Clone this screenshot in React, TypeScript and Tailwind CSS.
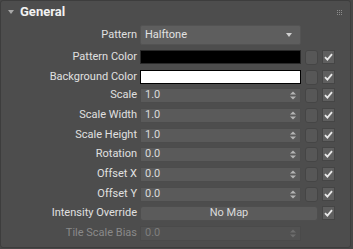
import React from 'react';

const font = { fontFamily: 'Roboto, "Liberation Sans", Arial, sans-serif' };

const Spinner = ({ dim }: { dim?: boolean }) => (
  <svg width="6" height="9" viewBox="0 0 6 9" className="shrink-0">
    <path d="M0 3.5 L3 0.5 L6 3.5 Z" fill={dim ? '#6e6e6e' : '#b4b4b4'} />
    <path d="M0 5.5 L3 8.5 L6 5.5 Z" fill={dim ? '#6e6e6e' : '#b4b4b4'} />
  </svg>
);

const MapSlot = () => (
  <div className="ml-[4px] w-[13px] h-[15px] rounded-[3px] bg-[#575757] border border-[#454545]" />
);

const Check = () => (
  <div className="ml-[4px] w-[13px] h-[14px] bg-[#5f5f5f] border border-[#454545] flex items-center justify-center">
    <svg width="9" height="8" viewBox="0 0 9 8">
      <path d="M1 4.2 L3.4 6.6 L8 1.2" stroke="#e8e8e8" strokeWidth="1.8" fill="none" />
    </svg>
  </div>
);

type RowProps = { label: string; h: string; children: React.ReactNode; dim?: boolean };

const Row = ({ label, h, children, dim }: RowProps) => (
  <div className={`flex items-start pt-[2px] ${h}`}>
    <div
      className={`w-[136px] h-[15px] flex items-center justify-end text-[11px] ${dim ? 'text-[#8a8a8a]' : 'text-[#e0e0e0]'}`}
    >
      {label}
    </div>
    <div className="ml-[3px] flex items-start">{children}</div>
  </div>
);

const NumField = ({ value, dim }: { value: string; dim?: boolean }) => (
  <div
    className={`w-[161px] h-[15px] flex items-center justify-between pl-[4px] pr-[4px] border text-[11px] ${
      dim ? 'bg-[#525252] border-[#4a4a4a] text-[#7e7e7e]' : 'bg-[#5a5a5a] border-[#4c4c4c] text-[#dadada]'
    }`}
  >
    <span>{value}</span>
    <Spinner dim={dim} />
  </div>
);

const numRows: { label: string; h: string }[] = [
  { label: 'Scale', h: 'h-[20px]' },
  { label: 'Scale Width', h: 'h-[20px]' },
  { label: 'Scale Height', h: 'h-[19px]' },
  { label: 'Rotation', h: 'h-[20px]' },
  { label: 'Offset X', h: 'h-[20px]' },
  { label: 'Offset Y', h: 'h-[19px]' },
];

export default function App() {
  return (
    <div className="w-[353px] h-[249px] bg-[#474747] overflow-hidden" style={font}>
      <div className="w-[351px] h-[248px] bg-[#4d4d4d] border border-[#3d3d3d] rounded-[3px]">
        <div className="h-[22px] flex items-center pl-[7px] pr-[8px]">
          <svg width="6" height="5" viewBox="0 0 6 5">
            <path d="M0 0 L6 0 L3 4 Z" fill="#a8a8a8" />
          </svg>
          <span className="ml-[6px] text-[13px] font-bold text-[#f2f2f2]">General</span>
          <div className="ml-auto grid grid-cols-3 gap-[1px]">
            {Array.from({ length: 9 }).map((_, i) => (
              <div key={i} className="w-[1px] h-[1px] bg-[#8c8c8c]" />
            ))}
          </div>
        </div>

        <div className="flex items-center h-[20px] mt-[2px]">
          <div className="w-[136px] text-right text-[11px] text-[#e0e0e0]">Pattern</div>
          <div className="ml-[3px] w-[161px] h-[20px] bg-[#5e5e5e] border border-[#535353] rounded-[2px] flex items-center justify-between pl-[4px] pr-[8px] text-[11px] text-[#e2e2e2]">
            <span>Halftone</span>
            <svg width="6" height="4" viewBox="0 0 6 4">
              <path d="M0 0 L6 0 L3 4 Z" fill="#d0d0d0" />
            </svg>
          </div>
        </div>

        <div className="mt-[3px]">
          <Row label="Pattern Color" h="h-[20px]">
            <div className="w-[161px] h-[14px] bg-black border border-[#2a2a2a]" />
            <MapSlot />
            <Check />
          </Row>
          <Row label="Background Color" h="h-[18px]">
            <div className="w-[161px] h-[14px] bg-white border border-black" />
            <MapSlot />
            <Check />
          </Row>
          {numRows.map((r) => (
            <Row key={r.label} label={r.label} h={r.h}>
              <NumField value={r.label === 'Rotation' || r.label.startsWith('Offset') ? '0.0' : '1.0'} />
              <MapSlot />
              <Check />
            </Row>
          ))}
          <Row label="Intensity Override" h="h-[20px]">
            <div className="w-[178px] h-[15px] rounded-[3px] bg-[#5b5b5b] border border-[#4e4e4e] flex items-center justify-center text-[11px] text-[#dcdcdc]">
              No Map
            </div>
            <Check />
          </Row>
          <Row label="Tile Scale Bias" h="h-[20px]" dim>
            <NumField value="0.0" dim />
          </Row>
        </div>
      </div>
    </div>
  );
}
